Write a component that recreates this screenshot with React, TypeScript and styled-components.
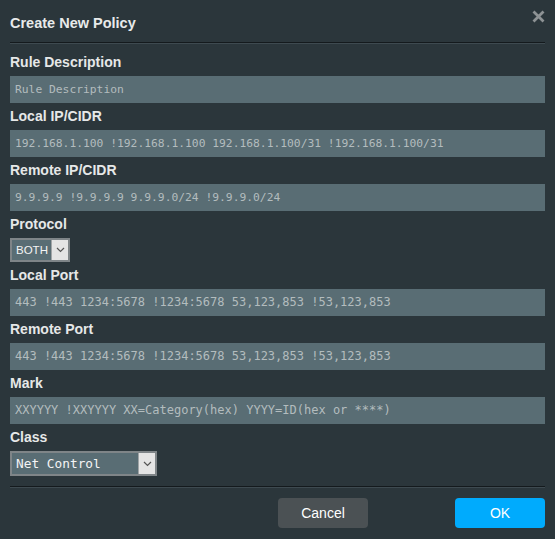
import React from 'react';
import styled, { createGlobalStyle } from 'styled-components';

const GlobalStyle = createGlobalStyle`
  html, body {
    margin: 0;
    padding: 0;
    background: #2b363b;
  }
  * {
    box-sizing: border-box;
  }
`;

const Dialog = styled.div`
  width: 555px;
  height: 539px;
  background-color: #2b363b;
  padding: 0 10px;
  font-family: 'Liberation Sans', Arial, sans-serif;
  display: flex;
  flex-direction: column;
  position: relative;
`;

const Header = styled.div`
  height: 32px;
  padding-top: 13px;
  line-height: 20px;
  font-size: 14.5px;
  font-weight: bold;
  color: #e8eaea;
`;

const CloseButton = styled.div`
  position: absolute;
  top: 8px;
  right: 9px;
  width: 16px;
  height: 16px;
  display: flex;
  align-items: center;
  justify-content: center;
  &:hover {
    cursor: pointer;
  }
`;

const Divider = styled.div<{ gap: number }>`
  margin-top: ${(props) => props.gap}px;
  height: 2px;
  border-top: 1px solid #141a1d;
  border-bottom: 1px solid #3e4a50;
`;

const Form = styled.div`
  padding-top: 8px;
  display: flex;
  flex-direction: column;
  gap: 3px;
`;

const Field = styled.div`
  display: flex;
  flex-direction: column;
`;

const Label = styled.div`
  height: 20px;
  line-height: 21px;
  font-size: 14px;
  font-weight: bold;
  color: #e6e8e8;
  margin-bottom: 4px;
`;

const TextInput = styled.div<{ fontPx: number }>`
  height: 27px;
  line-height: 27px;
  background-color: #596d74;
  padding-left: 5px;
  font-family: 'DejaVu Sans Mono', 'Liberation Mono', monospace;
  font-size: ${(props) => props.fontPx}px;
  color: #b3bcbe;
  white-space: nowrap;
  overflow: hidden;
`;

const SelectBox = styled.div<{ widthPx: number; mono?: boolean }>`
  width: ${(props) => props.widthPx}px;
  height: ${(props) => (props.mono ? 25 : 24)}px;
  display: flex;
  background-color: #596d74;
  border: 2px solid #7f8588;
  color: #f4f4f4;
  font-family: ${(props) =>
    props.mono ? "'DejaVu Sans Mono', 'Liberation Mono', monospace" : "'Liberation Sans', Arial, sans-serif"};
  font-size: ${(props) => (props.mono ? '12.8px' : '11.5px')};
`;

const SelectValue = styled.div`
  flex: 1;
  display: flex;
  align-items: center;
  padding-left: 4px;
`;

const SelectArrow = styled.div`
  width: 17px;
  background-color: #e4e4e4;
  border-left: 1px solid #a0a4a6;
  display: flex;
  align-items: center;
  justify-content: center;
`;

const Footer = styled.div`
  margin-top: 10px;
  display: flex;
  justify-content: flex-end;
  gap: 87px;
`;

const Button = styled.div<{ primary?: boolean }>`
  width: 90px;
  height: 30px;
  border-radius: 4px;
  display: flex;
  align-items: center;
  justify-content: center;
  font-size: 14px;
  color: #ffffff;
  background-color: ${(props) => (props.primary ? '#00abfd' : '#4b5154')};
  &:hover {
    cursor: pointer;
  }
`;

const Chevron = () => (
  <svg width="9" height="6" viewBox="0 0 9 6">
    <path d="M1 1 L4.5 4.5 L8 1" fill="none" stroke="#555" strokeWidth="1.2" />
  </svg>
);

const fields = [
  { label: 'Rule Description', value: 'Rule Description' },
  { label: 'Local IP/CIDR', value: '192.168.1.100 !192.168.1.100 192.168.1.100/31 !192.168.1.100/31' },
  { label: 'Remote IP/CIDR', value: '9.9.9.9 !9.9.9.9 9.9.9.0/24 !9.9.9.0/24' },
];

const portFields = [
  { label: 'Local Port', value: '443 !443 1234:5678 !1234:5678 53,123,853 !53,123,853' },
  { label: 'Remote Port', value: '443 !443 1234:5678 !1234:5678 53,123,853 !53,123,853' },
  { label: 'Mark', value: 'XXYYYY !XXYYYY XX=Category(hex) YYYY=ID(hex or ****)' },
];

const App = () => (
  <>
    <GlobalStyle />
    <Dialog>
      <Header>Create New Policy</Header>
      <CloseButton>
        <svg width="13" height="13" viewBox="0 0 13 13">
          <path d="M1.5 1.5 L11.5 11.5 M11.5 1.5 L1.5 11.5" stroke="#8d9294" strokeWidth="2.8" />
        </svg>
      </CloseButton>
      <Divider gap={10} />
      <Form>
        {fields.map((f) => (
          <Field key={f.label}>
            <Label>{f.label}</Label>
            <TextInput fontPx={11.3}>{f.value}</TextInput>
          </Field>
        ))}
        <Field>
          <Label>Protocol</Label>
          <SelectBox widthPx={60}>
            <SelectValue>BOTH</SelectValue>
            <SelectArrow>
              <Chevron />
            </SelectArrow>
          </SelectBox>
        </Field>
        {portFields.map((f) => (
          <Field key={f.label}>
            <Label>{f.label}</Label>
            <TextInput fontPx={12}>{f.value}</TextInput>
          </Field>
        ))}
        <Field>
          <Label>Class</Label>
          <SelectBox widthPx={147} mono>
            <SelectValue>Net Control</SelectValue>
            <SelectArrow>
              <Chevron />
            </SelectArrow>
          </SelectBox>
        </Field>
      </Form>
      <Divider gap={10} />
      <Footer>
        <Button>Cancel</Button>
        <Button primary>OK</Button>
      </Footer>
    </Dialog>
  </>
);

export default App;
